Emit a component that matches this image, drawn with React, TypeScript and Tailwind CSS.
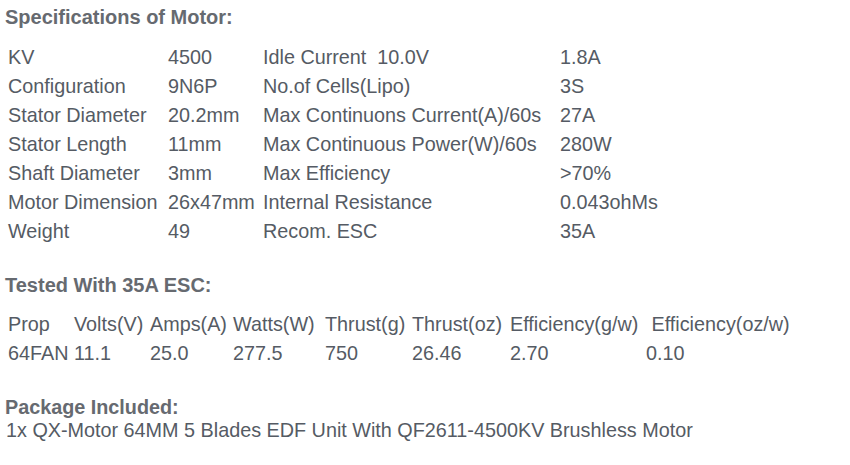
const specs: [string, string, string, string][] = [
  ["KV", "4500", "Idle Current  10.0V", "1.8A"],
  ["Configuration", "9N6P", "No.of Cells(Lipo)", "3S"],
  ["Stator Diameter", "20.2mm", "Max Continuons Current(A)/60s", "27A"],
  ["Stator Length", "11mm", "Max Continuous Power(W)/60s", "280W"],
  ["Shaft Diameter", "3mm", "Max Efficiency", ">70%"],
  ["Motor Dimension", "26x47mm", "Internal Resistance", "0.043ohMs"],
  ["Weight", "49", "Recom. ESC", "35A"],
];

const testHead = ["Prop", "Volts(V)", "Amps(A)", "Watts(W)", "Thrust(g)", "Thrust(oz)", "Efficiency(g/w)", "\u00a0Efficiency(oz/w)"];
const testRow = ["64FAN", "11.1", "25.0", "277.5", "750", "26.46", "2.70", "0.10"];
const testCols = ["w-[66px]", "w-[76px]", "w-[83px]", "w-[92px]", "w-[87px]", "w-[98px]", "w-[136px]", "w-[170px]"];

function Heading({ children }: { children: string }) {
  return <h2 className="font-bold text-[20px] leading-[29px] text-[#666a70]">{children}</h2>;
}

export default function App() {
  return (
    <div className="w-[850px] h-[465px] bg-white pl-[5px] pt-[3px] text-[#555b64] font-['Liberation_Sans',Arial,sans-serif] text-[19.8px] leading-[29px]">
      <Heading>Specifications of Motor:</Heading>
      <div className="mt-[11px] pl-[3px]">
        {specs.map((r) => (
          <div key={r[0]} className="flex whitespace-pre">
            <span className="w-[160px]">{r[0]}</span>
            <span className="w-[95px]">{r[1]}</span>
            <span className="w-[297px]">{r[2]}</span>
            <span>{r[3]}</span>
          </div>
        ))}
      </div>

      <div className="mt-[25px]">
        <Heading>Tested With 35A ESC:</Heading>
      </div>
      <div className="mt-[10px] pl-[3px]">
        {[testHead, testRow].map((row, i) => (
          <div key={i} className="flex whitespace-pre">
            {row.map((c, j) => (
              <span key={j} className={testCols[j]}>{c}</span>
            ))}
          </div>
        ))}
      </div>

      <div className="mt-[28px] leading-[23px]">
        <div className="font-bold text-[#666a70]">Package Included:</div>
        <div className="pl-[1px]">1x QX-Motor 64MM 5 Blades EDF Unit With QF2611-4500KV Brushless Motor</div>
      </div>
    </div>
  );
}
